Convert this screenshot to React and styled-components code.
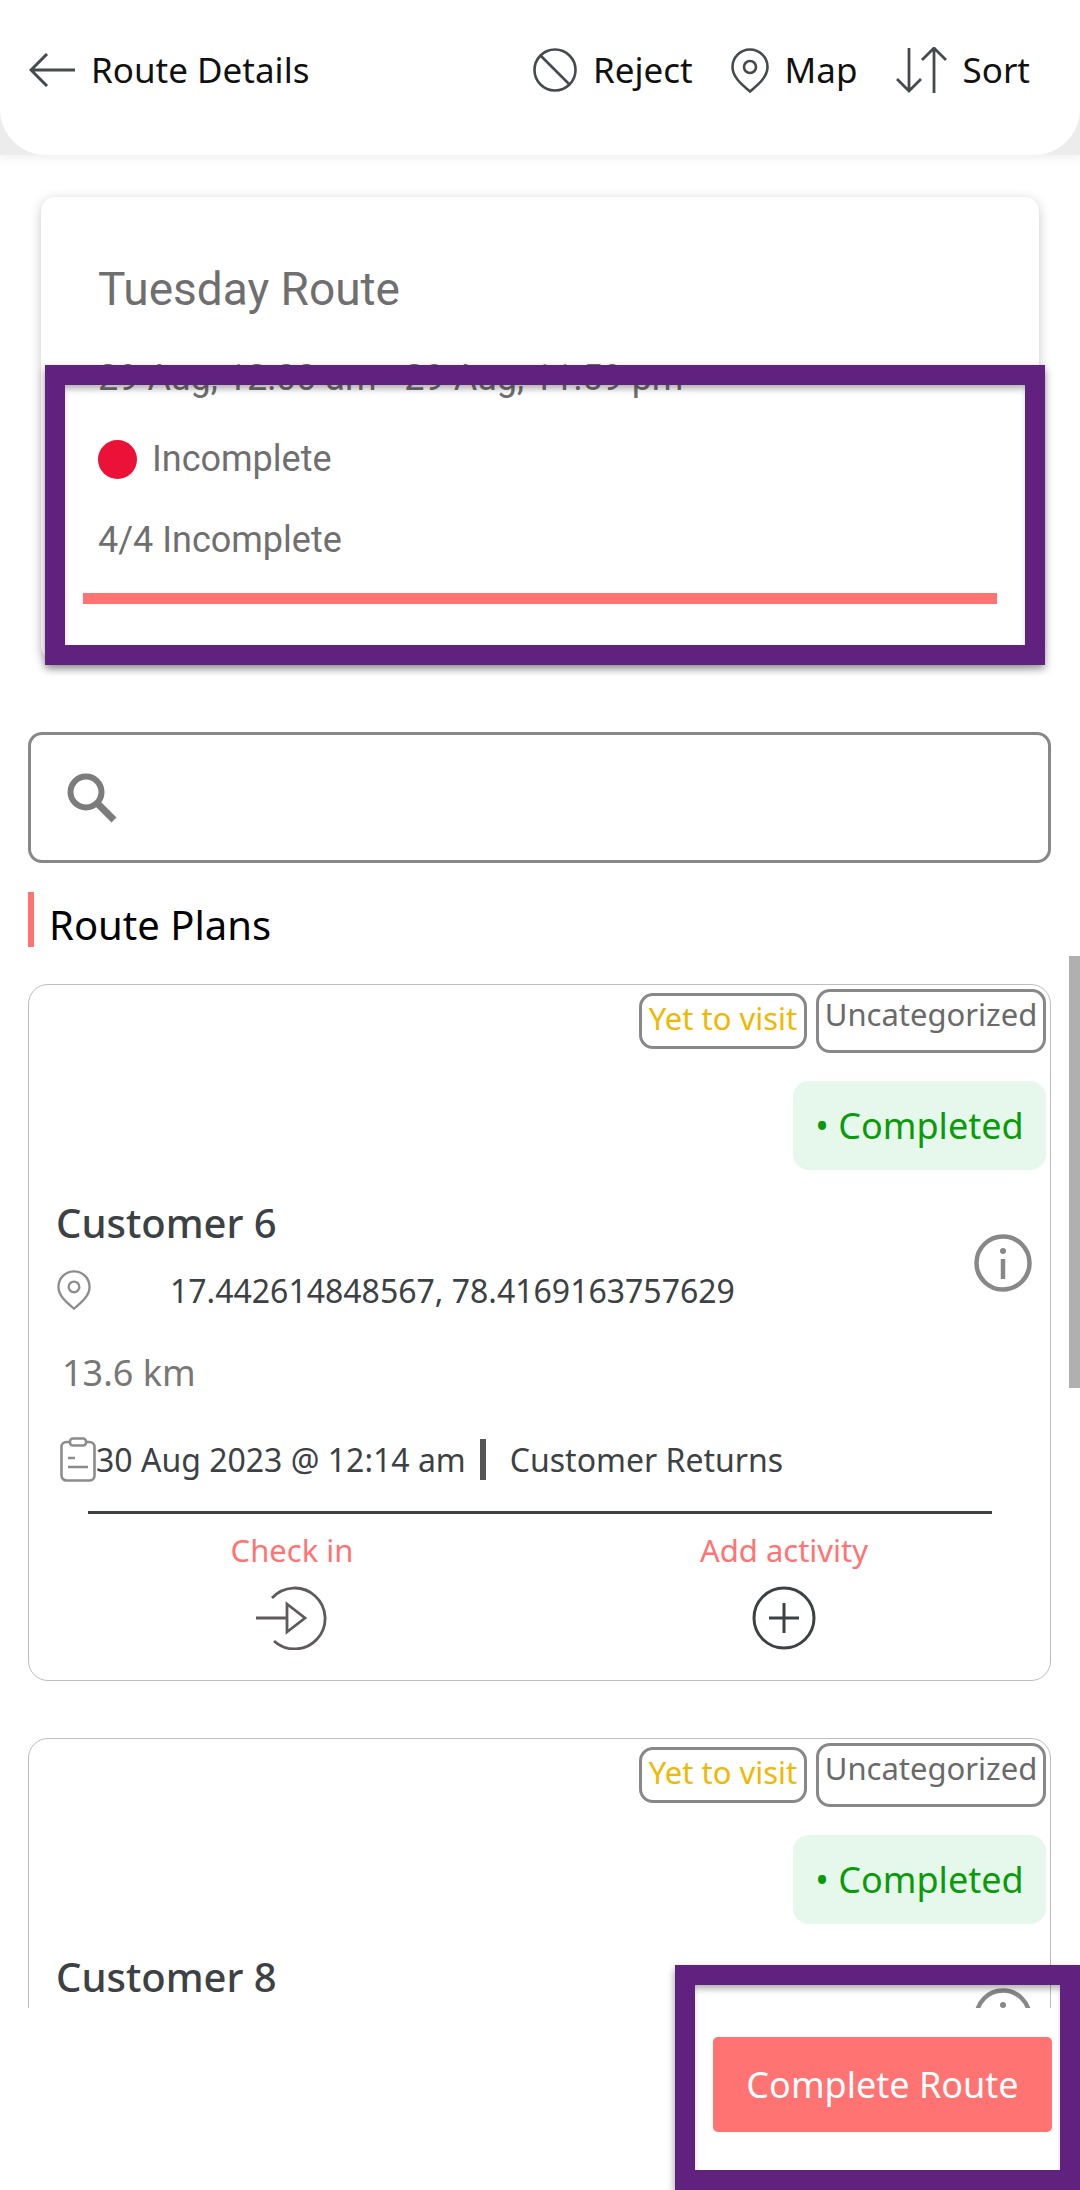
import React from 'react';
import styled, { createGlobalStyle } from 'styled-components';

const GlobalStyle = createGlobalStyle`
  html, body {
    margin: 0;
    padding: 0;
    background: #fff;
  }
  * {
    box-sizing: border-box;
  }
`;

const NUNITO = `"Noto Sans", "Open Sans", sans-serif`;
const ROBOTO = `Roboto, sans-serif`;
const CORAL = '#ff7373';
const INK = '#3c4144';

const Page = styled.div`
  position: relative;
  width: 1080px;
  height: 2190px;
  overflow: hidden;
  background: #fff;
  display: flex;
  flex-direction: column;
  font-family: ${NUNITO};
`;

const HeaderBand = styled.div`
  flex: none;
  height: 155px;
  background: #ececec;
  box-shadow: 0 4px 10px rgba(0, 0, 0, 0.06);
  position: relative;
  z-index: 1;
`;

const Header = styled.header`
  height: 155px;
  background: #fff;
  border-radius: 0 0 46px 46px;
  padding: 47px 50px 0 29px;
  display: flex;
  justify-content: space-between;
  align-items: flex-start;
`;

const HeaderGroup = styled.div`
  display: flex;
  align-items: center;
  gap: ${(p) => p.$gap || 0}px;
  height: 46px;
`;

const HeaderItem = styled.div`
  display: flex;
  align-items: center;
  gap: ${(p) => p.$gap || 16}px;
  font-size: 35px;
  line-height: 46px;
  color: #111;
  letter-spacing: ${(p) => p.$spacing || 0}px;
`;

const Scroller = styled.main`
  flex: none;
  height: 1853px;
  overflow: hidden;
  padding-top: 42px;
`;

const SummaryCard = styled.section`
  width: 998px;
  height: 463px;
  margin-left: 41px;
  padding: 65px 42px 0 57px;
  background: #fff;
  border-radius: 14px;
  box-shadow: 0 3px 12px rgba(0, 0, 0, 0.22);
  font-family: ${ROBOTO};
  color: #6f6f6f;
`;

const RouteTitle = styled.h1`
  margin: 0;
  font-size: 46px;
  line-height: 54px;
  font-weight: 400;
`;

const SummaryLine = styled.div`
  margin-top: ${(p) => p.$top}px;
  font-size: 36px;
  line-height: 42px;
  display: flex;
  align-items: center;
  gap: 15px;
`;

const StatusDot = styled.span`
  width: 39px;
  height: 39px;
  border-radius: 50%;
  background: #ec1136;
`;

const ProgressBar = styled.div`
  height: 11px;
  margin: 32px 0 0 -15px;
  background: ${CORAL};
`;

const SearchBox = styled.div`
  width: 1023px;
  height: 131px;
  margin: 72px 0 0 28px;
  padding-left: 36px;
  display: flex;
  align-items: center;
  border: 3px solid #888;
  border-radius: 14px;
`;

const SectionTitle = styled.h2`
  margin: 29px 0 0 28px;
  height: 55px;
  padding-left: 15px;
  border-left: 6px solid ${CORAL};
  font-size: 40px;
  line-height: 66px;
  font-weight: 400;
  color: #000;
`;

const PlanCard = styled.article`
  width: 1023px;
  height: 697px;
  margin: ${(p) => p.$top}px 0 0 28px;
  padding: 4px 4px 0 27px;
  border: 1px solid #bdbdbd;
  border-radius: 20px;
`;

const BadgeRow = styled.div`
  display: flex;
  justify-content: flex-end;
  align-items: flex-start;
  gap: 9px;
`;

const Badge = styled.span`
  display: block;
  height: ${(p) => p.$height}px;
  width: ${(p) => p.$width}px;
  margin-top: ${(p) => p.$top || 0}px;
  border: 3px solid #888;
  border-radius: 14px;
  font-size: 31px;
  line-height: 44px;
  text-align: center;
  white-space: nowrap;
  color: ${(p) => p.$color};
`;

const StatusRow = styled.div`
  display: flex;
  justify-content: flex-end;
  margin-top: 28px;
`;

const StatusPill = styled.div`
  width: 253px;
  height: 89px;
  border-radius: 16px;
  background: #e6f7ec;
  color: #0a9a0a;
  font-size: 36px;
  line-height: 89px;
  text-align: center;
  white-space: nowrap;
`;

const NameRow = styled.div`
  display: flex;
  justify-content: space-between;
  padding-right: 14px;
  margin-top: 26px;
`;

const CustomerName = styled.h3`
  margin: 0;
  font-size: 40px;
  line-height: 54px;
  font-weight: 500;
  color: ${INK};
`;

const InfoIconWrap = styled.div`
  margin-top: 38px;
  height: 60px;
`;

const CoordRow = styled.div`
  display: flex;
  align-items: center;
  margin-top: -26px;
  height: 44px;
  font-size: 32px;
  color: ${INK};
`;

const Coords = styled.span`
  margin-left: 78px;
`;

const Distance = styled.div`
  margin: 36px 0 0 6px;
  font-size: 36px;
  line-height: 50px;
  color: #777;
`;

const MetaRow = styled.div`
  display: flex;
  align-items: center;
  height: 46px;
  margin: 38px 0 0 4px;
  font-size: 32px;
  color: ${INK};
  white-space: nowrap;
`;

const MetaDivider = styled.span`
  width: 6px;
  height: 41px;
  margin: 0 24px 0 14px;
  background: #555;
`;

const Rule = styled.hr`
  width: 904px;
  height: 3px;
  margin: 29px 0 0 32px;
  border: 0;
  background: ${INK};
`;

const ActionRow = styled.div`
  display: grid;
  grid-template-columns: 492px 492px;
  margin: 14px 0 0 -10px;
`;

const Action = styled.div`
  display: flex;
  flex-direction: column;
  align-items: center;
  gap: 14px;
  font-size: 31px;
  line-height: 44px;
  color: ${CORAL};
`;

const Footer = styled.footer`
  flex: 1;
  display: flex;
  justify-content: flex-end;
  align-items: flex-start;
  padding: 29px 28px 0 0;
  background: #fff;
  position: relative;
`;

const CompleteButton = styled.button`
  width: 339px;
  height: 95px;
  border: 0;
  border-radius: 5px;
  background: ${CORAL};
  color: #fff;
  font-family: ${NUNITO};
  font-size: 36px;
`;

const HighlightFrame = styled.div`
  position: absolute;
  left: ${(p) => p.$left}px;
  top: ${(p) => p.$top}px;
  width: ${(p) => p.$width}px;
  height: ${(p) => p.$height}px;
  border: 20px solid #61217f;
  z-index: 5;
  box-shadow: 0 4px 8px rgba(0, 0, 0, 0.4), inset 0 6px 6px -2px rgba(0, 0, 0, 0.3);
`;

const ScrollThumb = styled.div`
  position: absolute;
  right: 0;
  top: 956px;
  width: 11px;
  height: 432px;
  background: #b0b0b0;
`;

const BackIcon = () => (
  <svg width="46" height="34" viewBox="0 0 46 34" fill="none" stroke="#454a4d" strokeWidth="3">
    <path d="M46 17H2M18 1L2 17l16 16" />
  </svg>
);

const RejectIcon = () => (
  <svg width="44" height="44" viewBox="0 0 44 44" fill="none" stroke="#454a4d" strokeWidth="2.6">
    <circle cx="22" cy="22" r="20.5" />
    <path d="M8 8l29 29" />
  </svg>
);

const PinIcon = ({ width = 38, height = 45, color = '#454a4d', strokeWidth = 2.6 }) => (
  <svg width={width} height={height} viewBox="0 0 38 45" fill="none" stroke={color} strokeWidth={strokeWidth}>
    <path d="M19 43.5C13 38 1.5 30 1.5 19a17.5 17.5 0 0 1 35 0C36.500 30 25 38 19 43.500z" />
    <circle cx="19" cy="19" r="6" />
  </svg>
);

const SortIcon = () => (
  <svg width="51" height="46" viewBox="0 0 51 46" fill="none" stroke="#454a4d" strokeWidth="2.800">
    <path d="M13 1v42M1 32l12 12 12-12" />
    <path d="M38 2v44M26 13L38 1l12 12" />
  </svg>
);

const SearchIcon = () => (
  <svg width="50" height="50" viewBox="0 0 50 50" fill="none" stroke="#7c7c7c" strokeWidth="6">
    <circle cx="19" cy="19" r="15.500" />
    <path d="M30 30l17 17" strokeWidth="7" />
  </svg>
);

const InfoIcon = () => (
  <svg width="58" height="58" viewBox="0 0 58 58" fill="none" stroke="#888" strokeWidth="4.500">
    <circle cx="29" cy="29" r="26.500" />
    <circle cx="29" cy="17" r="3" fill="#888" stroke="none" />
    <path d="M29 25v20" />
  </svg>
);

const ClipboardIcon = () => (
  <svg width="36" height="45" viewBox="0 0 36 45" fill="none" stroke="#8c8c8c" strokeWidth="2.600">
    <rect x="1.500" y="5" width="33" height="38.500" rx="5" />
    <rect x="10" y="1.500" width="16" height="7" rx="3" fill="#fff" />
    <path d="M8 21h7M8 30h20" />
  </svg>
);

const CheckInIcon = () => (
  <svg width="72" height="64" viewBox="0 0 72 64" fill="none" stroke="#5f5b5b" strokeWidth="2.800">
    <path d="M16 12A30.500 30.500 0 1 1 18 55" />
    <path d="M0 32h31M31 18l18 14-18 14z" />
  </svg>
);

const AddIcon = () => (
  <svg width="64" height="64" viewBox="0 0 64 64" fill="none" stroke={INK} strokeWidth="3">
    <circle cx="32" cy="32" r="30" />
    <path d="M17 32h30M32 17v30" />
  </svg>
);

const Plan = ({ top, name }) => (
  <PlanCard $top={top}>
    <BadgeRow>
      <Badge $width={168} $height={56} $top={4} $color="#f0b800">Yet to visit</Badge>
      <Badge $width={230} $height={64} $color="#6a6a6a">Uncategorized</Badge>
    </BadgeRow>
    <StatusRow>
      <StatusPill>• Completed</StatusPill>
    </StatusRow>
    <NameRow>
      <CustomerName>{name}</CustomerName>
      <InfoIconWrap><InfoIcon /></InfoIconWrap>
    </NameRow>
    <CoordRow>
      <PinIcon width={36} height={40} color="#8c8c8c" />
      <Coords>17.442614848567, 78.4169163757629</Coords>
    </CoordRow>
    <Distance>13.6 km</Distance>
    <MetaRow>
      <ClipboardIcon />
      <span>30 Aug 2023 @ 12:14 am</span>
      <MetaDivider />
      <span>Customer Returns</span>
    </MetaRow>
    <Rule />
    <ActionRow>
      <Action>Check in<CheckInIcon /></Action>
      <Action>Add activity<AddIcon /></Action>
    </ActionRow>
  </PlanCard>
);

export default function App() {
  return (
    <Page>
      <GlobalStyle />
      <HeaderBand>
        <Header>
          <HeaderItem>
            <BackIcon />
            Route Details
          </HeaderItem>
          <HeaderGroup $gap={38}>
            <HeaderItem><RejectIcon />Reject</HeaderItem>
            <HeaderItem><PinIcon />Map</HeaderItem>
            <HeaderItem><SortIcon />Sort</HeaderItem>
          </HeaderGroup>
        </Header>
      </HeaderBand>
      <Scroller>
        <SummaryCard>
          <RouteTitle>Tuesday Route</RouteTitle>
          <SummaryLine $top={41}>29 Aug, 12:00 am - 29 Aug, 11:59 pm</SummaryLine>
          <SummaryLine $top={39}><StatusDot />Incomplete</SummaryLine>
          <SummaryLine $top={39}>4/4 Incomplete</SummaryLine>
          <ProgressBar />
        </SummaryCard>
        <SearchBox><SearchIcon /></SearchBox>
        <SectionTitle>Route Plans</SectionTitle>
        <Plan top={37} name="Customer 6" />
        <Plan top={57} name="Customer 8" />
      </Scroller>
      <Footer>
        <CompleteButton>Complete Route</CompleteButton>
      </Footer>
      <ScrollThumb />
      <HighlightFrame $left={45} $top={365} $width={1000} $height={300} />
      <HighlightFrame $left={675} $top={1965} $width={405} $height={225} />
    </Page>
  );
}
